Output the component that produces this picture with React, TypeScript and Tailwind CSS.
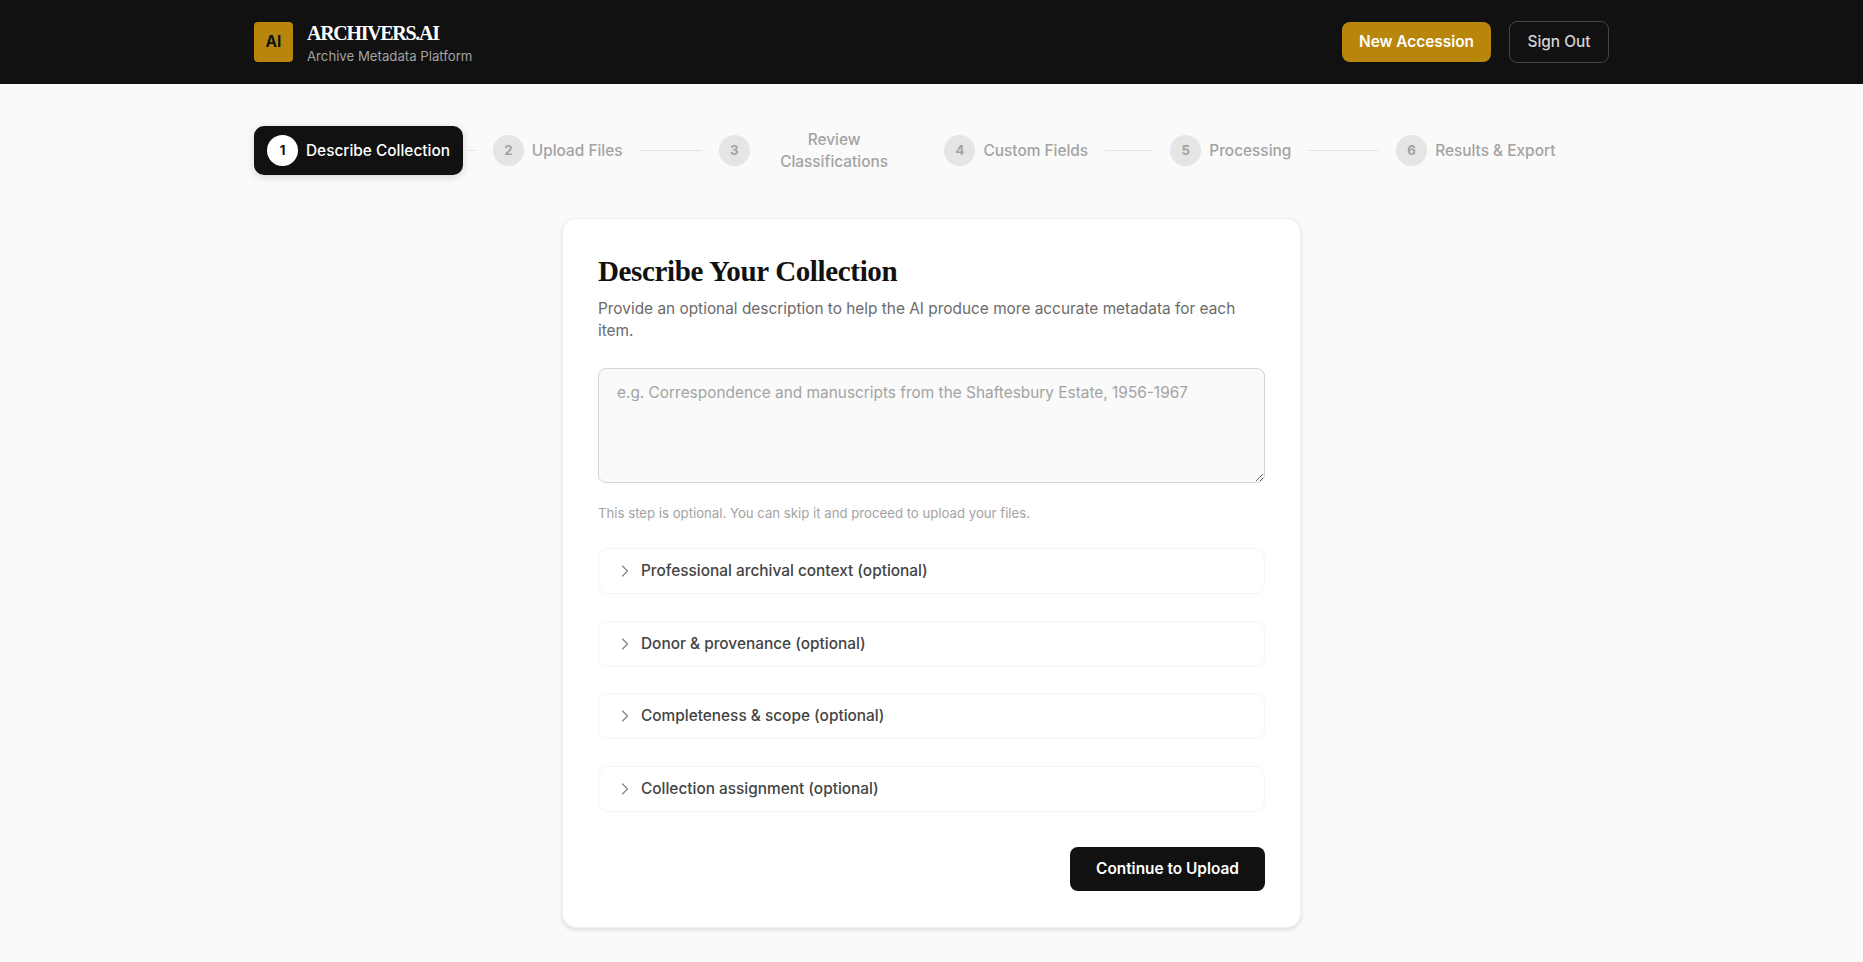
import { ChevronRight } from 'lucide-react';

const steps = ['Describe Collection', 'Upload Files', 'Review Classifications', 'Custom Fields', 'Processing', 'Results & Export'];
const sections = [
  'Professional archival context (optional)',
  'Donor & provenance (optional)',
  'Completeness & scope (optional)',
  'Collection assignment (optional)',
];

function Header() {
  return (
    <header className="h-[84px] bg-[#111111]">
      <div className="mx-auto flex h-full w-[1355px] items-center justify-between">
        <div className="flex items-center gap-[14px]">
          <div className="flex h-10 w-[39px] items-center justify-center rounded-[4px] bg-[#b8860b] text-[15.4px] font-bold text-[#111111]">AI</div>
          <div>
            <div className="font-['Liberation_Serif',serif] text-[20px] leading-[26px] font-bold tracking-[-1.3px] text-white">ARCHIVERS.AI</div>
            <div className="mt-px text-[13.2px] leading-[18px] text-[#a3a3a3]">Archive Metadata Platform</div>
          </div>
        </div>
        <div className="flex items-center gap-[18px]">
          <button type="button" className="h-10 w-[149px] rounded-[8px] bg-[#b8860b] text-[15.4px] font-semibold text-white">New Accession</button>
          <button type="button" className="h-[42px] w-[100px] rounded-[8px] border border-[#444444] text-[15.4px] font-medium text-[#d4d4d4]">Sign Out</button>
        </div>
      </div>
    </header>
  );
}

function Stepper() {
  return (
    <div className="mx-auto mt-[42px] grid w-[1355px] grid-cols-6">
      {steps.map((step, i) => (
        <div key={step} className="flex items-center">
          <div className={i === 0
            ? 'flex h-[49px] items-center gap-[8px] rounded-[10px] bg-[#111111] px-[13px] shadow-[0_2px_8px_rgba(0,0,0,0.15)]'
            : 'flex h-[49px] items-center gap-[8px] px-[13px]'}>
            <span className={i === 0
              ? 'flex h-[31px] w-[31px] shrink-0 items-center justify-center rounded-full bg-white text-[13.2px] font-bold text-[#111111]'
              : 'flex h-[31px] w-[31px] shrink-0 items-center justify-center rounded-full bg-[#e5e5e5] text-[13.2px] font-bold text-[#a3a3a3]'}>
              {i + 1}
            </span>
            <span className={i === 0
              ? 'text-center text-[15.4px] leading-[22px] font-medium text-white'
              : 'text-center text-[15.4px] leading-[22px] font-medium text-[#a3a3a3]'}>
              {step}
            </span>
          </div>
          {i < steps.length - 1 && <div className="mx-1 h-px min-w-0 flex-1 bg-[#e5e5e5]" />}
        </div>
      ))}
    </div>
  );
}

export default function App() {
  return (
    <div className="h-[962px] overflow-hidden bg-[#fafafa] font-['Inter',sans-serif]">
      <Header />
      <Stepper />
      <main className="mx-auto mt-[43px] h-[710px] w-[739px] rounded-[14px] border border-[#f0f0f0] bg-white px-[35px] pt-[34px] shadow-[0_2px_4px_rgba(0,0,0,0.12)]">
        <h1 className="font-['Liberation_Serif',serif] text-[29px] leading-[36px] font-bold tracking-[-0.35px] text-[#111111]">Describe Your Collection</h1>
        <p className="mt-[9px] text-[15.4px] leading-[22px] text-[#6b6b6b]">
          Provide an optional description to help the AI produce more accurate metadata for each item.
        </p>
        <textarea
          placeholder="e.g. Correspondence and manuscripts from the Shaftesbury Estate, 1956-1967"
          className="mt-[26px] block h-[115px] w-full rounded-[8px] border border-[#d4d4d4] bg-[#fafafa] px-[18px] py-[13px] text-[15.4px] leading-[22px] placeholder:text-[#a3a3a3]"
        />
        <p className="mt-[21px] text-[13.2px] leading-[18px] text-[#a3a3a3]">This step is optional. You can skip it and proceed to upload your files.</p>
        <div className="mt-[26px] flex flex-col gap-[26.5px]">
          {sections.map((section) => (
            <div key={section} className="flex h-[46px] items-center gap-[6px] rounded-[10px] border border-[#f5f5f5] px-[16px] text-[15.4px] font-medium text-[#444444]">
              <ChevronRight className="h-5 w-5 text-[#888888]" strokeWidth={1.5} />
              {section}
            </div>
          ))}
        </div>
        <div className="mt-[35px] flex justify-end">
          <button type="button" className="h-11 w-[195px] rounded-[8px] bg-[#111111] text-[15.4px] font-semibold text-white">Continue to Upload</button>
        </div>
      </main>
    </div>
  );
}
